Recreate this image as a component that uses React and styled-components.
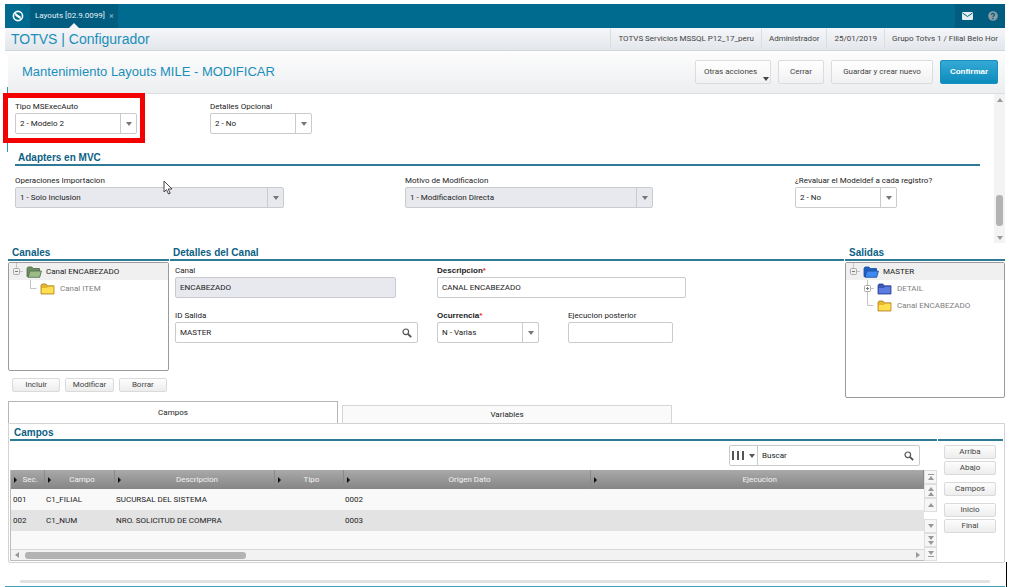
import React from "react";
import styled, { createGlobalStyle, css } from "styled-components";

const HEADING_FONT = `"Liberation Sans", Arial, sans-serif`;

const GlobalStyle = createGlobalStyle`
  * {
    box-sizing: border-box;
  }
  body {
    margin: 0;
    background: #fff;
    color: #222;
    font-family: Roboto, "Liberation Sans", sans-serif;
    font-size: 8px;
    line-height: 10px;
  }
  button, input, select {
    font: inherit;
    color: inherit;
    margin: 0;
  }
  h1, h2, ul {
    margin: 0;
    padding: 0;
    font-weight: normal;
  }
`;

const Page = styled.div`
  position: relative;
  display: flex;
  flex-direction: column;
  min-height: 100vh;
  padding: 4px 4px 0 5px;
`;

/* top bar */

const TopBar = styled.header`
  display: flex;
  height: 24px;
  background: #006b8f;
`;

const BarButton = styled.button`
  display: flex;
  align-items: center;
  justify-content: center;
  width: 25px;
  padding: 0;
  border: 0;
  background: ${({ $dark }) => ($dark ? "#005d7f" : "transparent")};
`;

const OpenTab = styled.div`
  position: relative;
  display: flex;
  align-items: center;
  gap: 4px;
  padding: 0 4px 0 5px;
  background: #005d7f;
  color: #e6f1f5;

  &::after {
    content: "";
    position: absolute;
    bottom: 0;
    left: 50%;
    margin-left: -5px;
    border: 5px solid transparent;
    border-top: 0;
    border-bottom-color: #f4f5f8;
  }
`;

const CloseTab = styled.button`
  padding: 0;
  border: 0;
  background: none;
  color: #8fbccc;
  font-size: 9px;
`;

const BarRight = styled.div`
  display: flex;
  margin-left: auto;
`;

/* product bar */

const BrandBar = styled.div`
  display: flex;
  align-items: center;
  height: 23px;
  padding-left: 6px;
  background: linear-gradient(#f5f6f9, #e3e6eb);
  border-bottom: 1px solid #d3d6db;
`;

const Brand = styled.div`
  flex: 1;
  color: #1b8fba;
  font-family: ${HEADING_FONT};
  font-size: 14px;
  line-height: 18px;
`;

const InfoItem = styled.span`
  padding: 5px 7px;
  border-left: 1px solid #dadde2;
  color: #444;
  white-space: nowrap;
`;

const ActionBar = styled.div`
  display: flex;
  align-items: center;
  gap: 7px;
  height: 43px;
  margin-left: 3px;
  padding: 0 7px 0 14px;
  background: linear-gradient(#fdfdfd, #eceef0);
  border-bottom: 1px solid #dcdee0;
`;

const Title = styled.h1`
  flex: 1;
  color: #1b8fba;
  font-family: ${HEADING_FONT};
  font-size: 13px;
  line-height: 16px;
`;

const ActionButton = styled.button`
  position: relative;
  min-width: ${({ $width }) => $width}px;
  height: 24px;
  padding: 0 8px;
  border: 1px solid #dcdcdc;
  border-radius: 2px;
  background: linear-gradient(#fff, #f1f1f1);
  color: #444;
  text-align: ${({ $menu }) => ($menu ? "left" : "center")};
  white-space: nowrap;

  ${({ $primary }) =>
    $primary &&
    css`
      border-color: #1590bf;
      background: linear-gradient(#35a9d6, #0c8cbd);
      color: #fff;
      font-family: ${HEADING_FONT};
      font-weight: bold;
    `}
`;

const Arrow = styled.span`
  display: inline-block;
  width: 0;
  height: 0;
  border: 3px solid transparent;
  ${({ $dir = "down", $color = "#777" }) =>
    ({
      down: css`border-top: 4px solid ${$color}; border-bottom: 0;`,
      up: css`border-bottom: 4px solid ${$color}; border-top: 0;`,
      left: css`border-right: 4px solid ${$color}; border-left: 0;`,
      right: css`border-left: 4px solid ${$color}; border-right: 0;`,
    })[$dir]}
`;

const MenuArrow = styled(Arrow)`
  position: absolute;
  right: 1px;
  bottom: 2px;
`;

/* form */

const FormArea = styled.section`
  display: flex;
  height: 149px;
`;

const FormBody = styled.div`
  flex: 1;
  padding: 8px 14px 0 10px;
`;

const FormGrid = styled.div`
  display: grid;
  grid-template-columns: repeat(5, 1fr);
  column-gap: 10px;
`;

const DetailGrid = styled.div`
  display: grid;
  grid-template-columns: 262px 131px 1fr;
  row-gap: 13px;
  padding: 5px 5px 0;
`;

const SectionTitle = styled.h2`
  padding-left: ${({ $indent = 3 }) => $indent}px;
  border-bottom: 2px solid #2f7a97;
  color: #0b6184;
  font-family: ${HEADING_FONT};
  font-size: 10px;
  font-weight: bold;
  line-height: 13px;
`;

const AdaptersTitle = styled(SectionTitle)`
  margin: 17px 0 10px;
`;

const FieldWrap = styled.div`
  display: flex;
  flex-direction: column;
  gap: 1px;
  grid-column: span ${({ $span = 1 }) => $span};
`;

const FieldLabel = styled.label`
  white-space: nowrap;

  ${({ $required }) =>
    $required &&
    css`
      font-family: ${HEADING_FONT};
      font-weight: bold;
    `}
`;

const Required = styled.span`
  color: #f22;
`;

const Control = styled.div`
  display: flex;
  align-items: center;
  width: ${({ $width }) => $width}px;
  height: 21px;
  border: 1px solid #c9cbcf;
  border-radius: 2px;
  background: ${({ $locked }) => ($locked ? "#e7e9ef" : "#fff")};
`;

const TextInput = styled.input`
  flex: 1;
  min-width: 0;
  height: 100%;
  padding: 0 4px;
  border: 0;
  outline: 0;
  background: transparent;

  &::placeholder {
    color: #222;
    opacity: 1;
  }
`;

const SelectBox = styled.select`
  flex: 1;
  min-width: 0;
  height: 100%;
  padding: 0 4px;
  border: 0;
  outline: 0;
  appearance: none;
  background: transparent;

  &:disabled {
    color: #222;
    opacity: 1;
  }
`;

const SelectArrow = styled.span`
  display: flex;
  align-items: center;
  justify-content: center;
  width: 16px;
  height: 100%;
  border-left: 1px solid #c9cbcf;
  pointer-events: none;
`;

const IconButton = styled.button`
  display: flex;
  align-items: center;
  justify-content: center;
  gap: 5px;
  width: ${({ $width = 20 }) => $width}px;
  height: 100%;
  padding: 0;
  border: 0;
  background: none;
`;

const ScrollTrack = styled.div`
  display: flex;
  flex-direction: column;
  align-items: center;
  justify-content: space-between;
  width: 11px;
  padding: 4px 0 3px;
  background: #f3f3f3;
`;

const ScrollThumb = styled.div`
  width: 7px;
  height: 31px;
  margin: auto 0 10px;
  border-radius: 3px;
  background: #b3b3b3;
`;

/* channel panels */

const Panels = styled.section`
  display: grid;
  grid-template-columns: 161px 1fr 160px;
  column-gap: 1px;
  margin-left: 3px;
  padding-top: 3px;
`;

const Tree = styled.ul`
  height: ${({ $height }) => $height}px;
  margin-top: 1px;
  border: 1px solid #9b9b9b;
  border-radius: 2px;
  list-style: none;
`;

const TreeRow = styled.li`
  display: flex;
  align-items: center;
  gap: 4px;
  height: 17px;
  padding-left: ${({ $level }) => 2 + $level * 14}px;
  background: ${({ $level }) => ($level ? "transparent" : "#f0f0f0")};
  color: ${({ $level }) => ($level ? "#808080" : "#222")};
  white-space: nowrap;
`;

const TreeIcons = styled.span`
  display: flex;
  align-items: center;
`;

const ButtonRow = styled.div`
  display: flex;
  gap: 5px;
  padding: 7px 2px 0 4px;
`;

const SmallButton = styled.button`
  flex: 1;
  height: 14px;
  padding: 0;
  border: 1px solid #dadada;
  border-radius: 2px;
  background: linear-gradient(#fdfdfd, #ededed);
  color: #444;
`;

/* tabs and grid */

const Tabs = styled.div`
  display: flex;
  align-items: flex-end;
  gap: 4px;
  margin: 3px 0 0 3px;
`;

const Tab = styled.button`
  flex: 0 0 33.1%;
  height: ${({ $active }) => ($active ? 22 : 18)}px;
  border: 1px solid ${({ $active }) => ($active ? "#b3b5b8" : "#d6d6d6")};
  border-bottom: 0;
  background: ${({ $active }) => ($active ? "#fff" : "#fafafa")};
`;

const TabPanel = styled.section`
  display: grid;
  grid-template-columns: 1fr 65px;
  column-gap: 1px;
  margin-left: 3px;
  padding: 2px 1px 1px;
  border: 1px solid #d3d3d3;
  border-radius: 0 0 2px 2px;
`;

const SearchRow = styled.div`
  display: flex;
  justify-content: flex-end;
  padding: 4px 17px 4px 0;
`;

const ColumnsButton = styled(IconButton)`
  border-right: 1px solid #c9cbcf;
`;

const GridFrame = styled.div`
  display: flex;
`;

const GridMain = styled.div`
  flex: 1;
  border: solid #bdbdbd;
  border-width: 0 0 1px 1px;
  background: #f9f9f9;
`;

const Grid = styled.table`
  width: 100%;
  border-collapse: collapse;
  table-layout: fixed;
`;

const HeadCell = styled.th`
  height: 19px;
  padding: 0;
  border-right: 1px solid #8a8a8a;
  background: linear-gradient(#a9a9a9, #858585);
  color: #f2f2f2;
  font-weight: normal;
`;

const HeadInner = styled.div`
  display: flex;
  align-items: center;
  padding-left: 3px;
`;

const HeadText = styled.span`
  flex: 1;
  text-align: center;
`;

const ColumnMark = styled(Arrow)`
  border-width: 3px 0 3px 3px;
`;

const Row = styled.tr`
  height: 21px;
  background: ${({ $alt }) => ($alt ? "#e3e3e3" : "#f9f9f9")};
`;

const Cell = styled.td`
  padding: 0 2px;
  white-space: nowrap;
`;

const HScroll = styled.div`
  display: flex;
  align-items: center;
  gap: 6px;
  height: 11px;
  margin-top: 18px;
  padding: 0 4px;
  border-top: 1px solid #d8d8d8;
  background: #f2f2f2;
`;

const HTrack = styled.div`
  flex: 1;
`;

const HThumb = styled.div`
  width: 25%;
  height: 7px;
  border-radius: 3px;
  background: #b3b3b3;
`;

const Pager = styled.div`
  display: flex;
  flex-direction: column;
  width: 13px;
`;

const PagerButton = styled.button`
  display: flex;
  flex-direction: column;
  align-items: center;
  justify-content: center;
  gap: 1px;
  height: 14px;
  padding: 0;
  border: 1px solid #dedede;
  background: #f6f6f6;

  &:nth-child(4) {
    margin-top: auto;
  }
`;

const PagerBar = styled.span`
  width: 6px;
  height: 1px;
  background: #999;
`;

const SideHead = styled.div`
  height: 15px;
  border-bottom: 2px solid #2f7a97;
`;

const SideButtons = styled.div`
  display: flex;
  flex-direction: column;
  gap: 7px;
  padding: 4px 7px 0 6px;
`;

const SideGroup = styled.div`
  display: flex;
  flex-direction: column;
  gap: 2px;

  button {
    flex: none;
  }
`;

const Footer = styled.footer`
  margin-top: auto;
  padding: 0 15px 3px;
  border-bottom: 1px solid #4a9cbd;

  &::before {
    content: "";
    display: block;
    height: 3px;
    border-radius: 2px;
    background: #e2e2e2;
  }
`;

/* things that lie over the page */

const Highlight = styled.div`
  position: absolute;
  top: 93px;
  left: 3px;
  width: 142px;
  height: 50px;
  border: 5px solid #f40000;
  pointer-events: none;
`;

const SideMark = styled.div`
  position: absolute;
  top: 87px;
  left: 7px;
  width: 1px;
  height: 65px;
  background: #2f95bb;
`;

const Pointer = styled.svg`
  position: absolute;
  top: 180px;
  left: 163px;
`;

const Caret = styled.div`
  position: absolute;
  right: 2px;
  bottom: 0;
  width: 1px;
  height: 25px;
  background: #000;
`;

const FOLDERS = {
  green: { edge: "#4d6b4a", back: "#6f8f62", front: "#9dbb86", open: true },
  blueOpen: { edge: "#164a9c", back: "#1f62c4", front: "#3f8af0", open: true },
  blue: { edge: "#2b3f8c", back: "#3c57b8", front: "#5b7ce0" },
  yellow: { edge: "#a8842c", back: "#e8b62a", front: "#ffdf50" },
};

function Folder({ kind }) {
  const { edge, back, front, open } = FOLDERS[kind];
  return (
    <svg width="16" height="12" viewBox="0 0 16 12" aria-hidden="true">
      {open ? (
        <>
          <path d="M1 10.500V2.500L2 1h4l1 1.500h6.500v8z" fill={back} stroke={edge} strokeWidth=".8" />
          <path d="M2 11.300 3.800 5h11.600l-1.700 6.300z" fill={front} stroke={edge} strokeWidth=".8" />
        </>
      ) : (
        <>
          <path d="M1 11V2.500L2 1h4l1 1.800h7V11z" fill={back} stroke={edge} strokeWidth=".8" />
          <path d="M1.800 10.200V5H7l1-1.200h5.400v6.400z" fill={front} />
        </>
      )}
    </svg>
  );
}

function Expander({ type }) {
  return (
    <svg width="15" height="17" viewBox="0 0 15 17" fill="none" aria-hidden="true">
      {type === "leaf" ? (
        <path d="M5.500 0v8.500h6" stroke="#c4c4c4" />
      ) : (
        <>
          <path d="M5.500 0v5M9 8.500h3" stroke="#c4c4c4" />
          <rect x="2.500" y="5.500" width="6" height="6" rx="1" stroke="#aaa" />
          <path d="M4 8.500h3" stroke="#777" />
          {type === "plus" && (
            <>
              <path d="M5.500 7v3" stroke="#777" />
              <path d="M5.500 12v5" stroke="#c4c4c4" />
            </>
          )}
        </>
      )}
    </svg>
  );
}

function SearchIcon() {
  return (
    <svg width="10" height="10" viewBox="0 0 10 10" fill="none" stroke="#555" aria-hidden="true">
      <circle cx="3.800" cy="3.800" r="2.800" strokeWidth="1.200" />
      <path d="m6 6 3.200 3.200" strokeWidth="1.800" />
    </svg>
  );
}

function SelectField({ id, label, value, width, span, locked, required }) {
  return (
    <FieldWrap $span={span}>
      <FieldLabel htmlFor={id} $required={required}>
        {label}
        {required && <Required>*</Required>}
      </FieldLabel>
      <Control $width={width} $locked={locked}>
        <SelectBox id={id} defaultValue={value} disabled={locked}>
          <option>{value}</option>
        </SelectBox>
        <SelectArrow>
          <Arrow />
        </SelectArrow>
      </Control>
    </FieldWrap>
  );
}

function TextField({ id, label, value, width, span, locked, required, search }) {
  return (
    <FieldWrap $span={span}>
      <FieldLabel htmlFor={id} $required={required}>
        {label}
        {required && <Required>*</Required>}
      </FieldLabel>
      <Control $width={width} $locked={locked}>
        <TextInput id={id} defaultValue={value} readOnly={locked} />
        {search && (
          <IconButton type="button" aria-label="Buscar">
            <SearchIcon />
          </IconButton>
        )}
      </Control>
    </FieldWrap>
  );
}

const INFO = ["TOTVS Servicios MSSQL P12_17_peru", "Administrador", "25/01/2019", "Grupo Totvs 1 / Filial Belo Hor"];

const CHANNELS = [
  { name: "Canal ENCABEZADO", level: 0, type: "minus", folder: "green" },
  { name: "Canal ITEM", level: 1, type: "leaf", folder: "yellow" },
];

const OUTPUTS = [
  { name: "MASTER", level: 0, type: "minus", folder: "blueOpen" },
  { name: "DETAIL", level: 1, type: "plus", folder: "blue" },
  { name: "Canal ENCABEZADO", level: 1, type: "leaf", folder: "yellow" },
];

const COLUMNS = [
  { name: "Sec.", width: "33px" },
  { name: "Campo", width: "70px" },
  { name: "Descripcion", width: "160px" },
  { name: "Tipo", width: "69px" },
  { name: "Origen Dato", width: "247px" },
  { name: "Ejecucion" },
];

const ROWS = [
  ["001", "C1_FILIAL", "SUCURSAL DEL SISTEMA", "", "0002", ""],
  ["002", "C1_NUM", "NRO. SOLICITUD DE COMPRA", "", "0003", ""],
];

const SIDE_GROUPS = [["Arriba", "Abajo"], ["Campos"], ["Inicio", "Final"]];

function TreeView({ items, height }) {
  return (
    <Tree $height={height}>
      {items.map((item) => (
        <TreeRow key={item.name} $level={item.level}>
          <TreeIcons>
            <Expander type={item.type} />
            <Folder kind={item.folder} />
          </TreeIcons>
          {item.name}
        </TreeRow>
      ))}
    </Tree>
  );
}

function FieldsGrid() {
  return (
    <GridFrame>
      <GridMain>
        <Grid>
          <colgroup>
            {COLUMNS.map((col) => (
              <col key={col.name} width={col.width} />
            ))}
          </colgroup>
          <thead>
            <tr>
              {COLUMNS.map((col) => (
                <HeadCell key={col.name}>
                  <HeadInner>
                    <ColumnMark $dir="right" $color="#111" />
                    <HeadText>{col.name}</HeadText>
                  </HeadInner>
                </HeadCell>
              ))}
            </tr>
          </thead>
          <tbody>
            {ROWS.map((row, i) => (
              <Row key={row[0]} $alt={i % 2 === 1}>
                {row.map((text, j) => (
                  <Cell key={j}>{text}</Cell>
                ))}
              </Row>
            ))}
          </tbody>
        </Grid>
        <HScroll>
          <Arrow $dir="left" $color="#999" />
          <HTrack>
            <HThumb />
          </HTrack>
          <Arrow $dir="right" $color="#999" />
        </HScroll>
      </GridMain>
      <Pager>
        <PagerButton type="button" aria-label="Primero">
          <PagerBar />
          <Arrow $dir="up" $color="#999" />
        </PagerButton>
        <PagerButton type="button" aria-label="Página anterior">
          <Arrow $dir="up" $color="#999" />
          <Arrow $dir="up" $color="#999" />
        </PagerButton>
        <PagerButton type="button" aria-label="Anterior">
          <Arrow $dir="up" $color="#999" />
        </PagerButton>
        <PagerButton type="button" aria-label="Siguiente">
          <Arrow $color="#999" />
        </PagerButton>
        <PagerButton type="button" aria-label="Página siguiente">
          <Arrow $color="#999" />
          <Arrow $color="#999" />
        </PagerButton>
        <PagerButton type="button" aria-label="Último">
          <Arrow $color="#999" />
          <PagerBar />
        </PagerButton>
      </Pager>
    </GridFrame>
  );
}

function App() {
  return (
    <Page>
      <GlobalStyle />
      <TopBar>
        <BarButton type="button" aria-label="Inicio">
          <svg width="12" height="12" viewBox="0 0 12 12" fill="none" stroke="#fff">
            <circle cx="6" cy="6" r="4.600" strokeWidth="1.600" />
            <path d="M3 3.500 8.500 7.200M9 8.500 3.500 4.800" strokeWidth="1.200" />
            <path d="M4 3.500v2.200l3.500 2.500" strokeWidth="1" />
          </svg>
        </BarButton>
        <OpenTab>
          Layouts [02.9.0099]
          <CloseTab type="button" aria-label="Cerrar pestaña">×</CloseTab>
        </OpenTab>
        <BarRight>
          <BarButton type="button" $dark aria-label="Mensajes">
            <svg width="11" height="8" viewBox="0 0 11 8">
              <rect width="11" height="8" rx="1" fill="#e3eef2" />
              <path d="m.5 1 5 3.500 5-3.500" fill="none" stroke="#005d7f" />
            </svg>
          </BarButton>
          <BarButton type="button" $dark aria-label="Ayuda">
            <svg width="10" height="10" viewBox="0 0 10 10">
              <circle cx="5" cy="5" r="4.800" fill="#8d9ba3" />
              <path d="M3.500 4c0-2 3-2 3-.3C6.500 4.800 5 4.800 5 6" fill="none" stroke="#005d7f" strokeWidth="1.200" />
              <circle cx="5" cy="7.600" r=".8" fill="#005d7f" />
            </svg>
          </BarButton>
        </BarRight>
      </TopBar>
      <BrandBar>
        <Brand>TOTVS | Configurador</Brand>
        {INFO.map((text) => (
          <InfoItem key={text}>{text}</InfoItem>
        ))}
      </BrandBar>
      <ActionBar>
        <Title>Mantenimiento Layouts MILE - MODIFICAR</Title>
        <ActionButton type="button" $width={76} $menu>
          Otras acciones
          <MenuArrow $color="#444" />
        </ActionButton>
        <ActionButton type="button" $width={46}>Cerrar</ActionButton>
        <ActionButton type="button" $width={102}>Guardar y crear nuevo</ActionButton>
        <ActionButton type="button" $width={58} $primary>Confirmar</ActionButton>
      </ActionBar>

      <FormArea>
        <FormBody>
          <FormGrid>
            <SelectField id="tipo" label="Tipo MSExecAuto" value="2 - Modelo 2" width={122} />
            <SelectField id="opcional" label="Detalles Opcional" value="2 - No" width={102} />
          </FormGrid>
          <AdaptersTitle>Adapters en MVC</AdaptersTitle>
          <FormGrid>
            <SelectField id="operaciones" label="Operaciones Importacion" value="1 - Solo Inclusion" width={269} span={2} locked />
            <SelectField id="motivo" label="Motivo de Modificacion" value="1 - Modificacion Directa" width={248} span={2} locked />
            <SelectField id="revaluar" label="¿Revaluar el Modeldef a cada registro?" value="2 - No" width={102} />
          </FormGrid>
        </FormBody>
        <ScrollTrack>
          <Arrow $dir="up" $color="#999" />
          <ScrollThumb />
          <Arrow $color="#999" />
        </ScrollTrack>
      </FormArea>

      <Panels>
        <div>
          <SectionTitle $indent={4}>Canales</SectionTitle>
          <TreeView items={CHANNELS} height={109} />
          <ButtonRow>
            <SmallButton type="button">Incluir</SmallButton>
            <SmallButton type="button">Modificar</SmallButton>
            <SmallButton type="button">Borrar</SmallButton>
          </ButtonRow>
        </div>
        <div>
          <SectionTitle>Detalles del Canal</SectionTitle>
          <DetailGrid>
            <TextField id="canal" label="Canal" value="ENCABEZADO" width={221} locked />
            <TextField id="descripcion" label="Descripcion" value="CANAL ENCABEZADO" width={249} span={2} required />
            <TextField id="salida" label="ID Salida" value="MASTER" width={243} search />
            <SelectField id="ocurrencia" label="Ocurrencia" value="N - Varias" width={102} required />
            <TextField id="ejecucion" label="Ejecucion posterior" value="" width={105} />
          </DetailGrid>
        </div>
        <div>
          <SectionTitle $indent={4}>Salidas</SectionTitle>
          <TreeView items={OUTPUTS} height={136} />
        </div>
      </Panels>

      <Tabs>
        <Tab type="button" $active>Campos</Tab>
        <Tab type="button">Variables</Tab>
      </Tabs>
      <TabPanel>
        <div>
          <SectionTitle $indent={4}>Campos</SectionTitle>
          <SearchRow>
            <Control $width={191}>
              <ColumnsButton type="button" $width={28} aria-label="Columnas">
                <svg width="12" height="9" viewBox="0 0 12 9" stroke="#555" strokeWidth="2">
                  <path d="M1 0v9M6 0v9M11 0v9" />
                </svg>
                <Arrow $color="#555" />
              </ColumnsButton>
              <TextInput aria-label="Buscar" placeholder="Buscar" />
              <IconButton type="button" aria-label="Buscar">
                <SearchIcon />
              </IconButton>
            </Control>
          </SearchRow>
          <FieldsGrid />
        </div>
        <div>
          <SideHead />
          <SideButtons>
            {SIDE_GROUPS.map((group) => (
              <SideGroup key={group[0]}>
                {group.map((name) => (
                  <SmallButton key={name} type="button">{name}</SmallButton>
                ))}
              </SideGroup>
            ))}
          </SideButtons>
        </div>
      </TabPanel>
      <Footer />

      <SideMark />
      <Highlight />
      <Pointer width="10" height="15" viewBox="0 0 10 15">
        <path d="M1 1v11l2.500-2.300L5.500 14l1.700-.8-2-4.200H9z" fill="#fff" stroke="#444" />
      </Pointer>
      <Caret />
    </Page>
  );
}

export default App;
